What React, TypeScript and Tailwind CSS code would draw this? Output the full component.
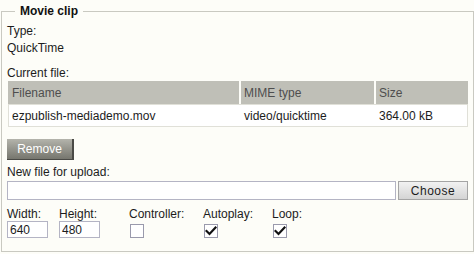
import React from "react";

function Check({ checked }: { checked?: boolean }) {
  return (
    <span className="mt-[3px] ml-[1px] flex h-[14px] w-[14px] items-center justify-center border border-[#9a9aac] bg-white">
      {checked && (
        <svg width="12" height="12" viewBox="0 0 12 12" aria-hidden="true">
          <path d="M1.5 6 L4.5 9 L10.5 2.5" fill="none" stroke="#111" strokeWidth="2.2" strokeLinecap="square" />
        </svg>
      )}
    </span>
  );
}

function SizeInput({ value }: { value: string }) {
  return (
    <div className="flex h-[17px] w-[41px] items-center border border-[#b4b4c4] bg-white pl-[2px] text-[12px] leading-[14px]">
      {value}
    </div>
  );
}

export default function App() {
  return (
    <div className="h-[254px] w-[474px] bg-[#fdfdf8] pl-[1px] pt-[4px] text-[12px] leading-[14px] text-[#1c1c1c] [font-family:'Liberation_Sans',Arial,sans-serif]">
      <fieldset className="h-[248px] w-[472px] border border-[#c9c9c1] px-[5px]">
        <legend className="ml-[8px] px-[5px] text-[12px] font-bold leading-[14px] text-[#111]">Movie clip</legend>

        <div className="mt-[6px]">Type:</div>
        <div className="mt-[3px]">QuickTime</div>

        <div className="mt-[11px]">Current file:</div>
        <table className="mt-[1px] ml-[1px] w-[460px] border-separate border-spacing-0 text-left">
          <thead>
            <tr className="h-[23px] text-[#4e4e4e]">
              <th className="w-[233px] border-r-2 border-[#fdfdf8] bg-[#bfbfb7] pl-[4px] font-normal">Filename</th>
              <th className="w-[135px] border-r-2 border-[#fdfdf8] bg-[#bfbfb7] pl-[3px] font-normal">MIME type</th>
              <th className="w-[92px] bg-[#bfbfb7] pl-[3px] font-normal">Size</th>
            </tr>
          </thead>
          <tbody>
            <tr className="h-[23px]">
              <td className="border-y border-l border-[#e0e0d8] bg-white pl-[3px]">ezpublish-mediademo.mov</td>
              <td className="border-y border-[#e0e0d8] bg-white pl-[3px]">video/quicktime</td>
              <td className="border-y border-r border-[#e0e0d8] bg-white pl-[3px]">364.00 kB</td>
            </tr>
          </tbody>
        </table>

        <button
          type="button"
          className="mt-[12px] flex h-[21px] w-[67px] items-center justify-center border-r-2 border-b border-[#4a4a46] bg-gradient-to-b from-[#b4b4ac] to-[#76766e] text-[12px] leading-[14px] text-white"
        >
          Remove
        </button>

        <div className="mt-[5px]">New file for upload:</div>
        <div className="mt-[2px] flex gap-[2px]">
          <div className="h-[19px] w-[389px] border border-[#b4b4c4] bg-white" />
          <button
            type="button"
            className="flex h-[19px] w-[70px] items-center justify-center border border-[#a4a4a4] bg-gradient-to-b from-[#f2f2f2] to-[#d4d4d4] text-[12px] leading-[14px] tracking-[0.5px] text-[#1c1c1c]"
          >
            Choose
          </button>
        </div>

        <div className="mt-[7px] flex">
          <div className="w-[52px]">
            <div>Width:</div>
            <SizeInput value="640" />
          </div>
          <div className="w-[70px]">
            <div>Height:</div>
            <SizeInput value="480" />
          </div>
          <div className="w-[74px]">
            <div>Controller:</div>
            <Check />
          </div>
          <div className="w-[69px]">
            <div>Autoplay:</div>
            <Check checked />
          </div>
          <div>
            <div>Loop:</div>
            <Check checked />
          </div>
        </div>
      </fieldset>
    </div>
  );
}
